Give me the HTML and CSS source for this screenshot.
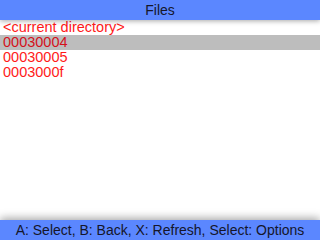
FILE: index.html
```html
<!DOCTYPE html>
<html>
<head>
<meta charset="utf-8">
<link rel="stylesheet" href="styles.css">
</head>
<body>
<div class="screen">
  <div class="topbar">Files</div>
  <ul class="list">
    <li class="item">&lt;current directory&gt;</li>
    <li class="item selected">00030004</li>
    <li class="item">00030005</li>
    <li class="item">0003000f</li>
  </ul>
  <div class="bottombar">A: Select, B: Back, X: Refresh, Select: Options</div>
</div>
</body>
</html>
```
FILE: styles.css
```css
html, body {
  margin: 0;
  padding: 0;
  width: 320px;
  height: 240px;
  overflow: hidden;
  background: #ffffff;
}
.screen {
  width: 320px;
  height: 240px;
  display: flex;
  flex-direction: column;
  font-family: "Liberation Sans", Arial, sans-serif;
}
.topbar {
  position: relative;
  z-index: 2;
  height: 20px;
  line-height: 20px;
  background: #5b87ff;
  color: #15162a;
  text-align: center;
  font-size: 14px;
  box-shadow: 0 1px 5px rgba(0,0,0,0.35);
}
.list {
  list-style: none;
  margin: 0;
  padding: 0;
  flex: 1;
}
.item {
  height: 15px;
  line-height: 15px;
  padding-left: 3px;
  font-size: 14.5px;
  color: #ff1a1a;
}
.item.selected {
  background: #bdbdbd;
  color: #d4111b;
}
.bottombar {
  position: relative;
  z-index: 2;
  height: 20px;
  line-height: 20px;
  background: #5b87ff;
  color: #15162a;
  text-align: center;
  font-size: 14px;
  box-shadow: 0 -2px 8px rgba(0,0,0,0.35);
}
```
